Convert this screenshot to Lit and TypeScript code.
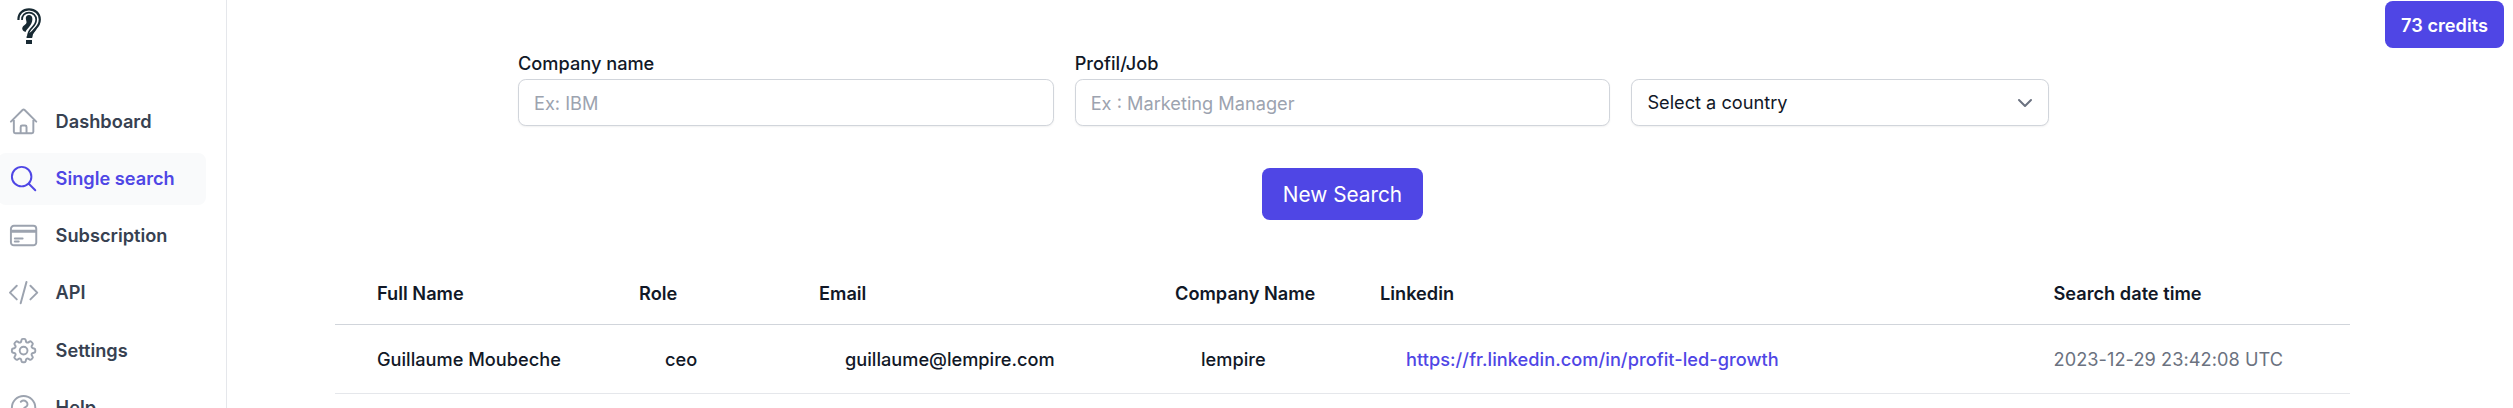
import { LitElement, html, css, svg } from "lit";
import { customElement } from "lit/decorators.js";

const ICONS: Record<string, string> = {
  home: "m2.25 12 8.954-8.955c.44-.439 1.152-.439 1.591 0L21.75 12M4.5 9.75v10.125c0 .621.504 1.125 1.125 1.125H9.75v-4.875c0-.621.504-1.125 1.125-1.125h2.25c.621 0 1.125.504 1.125 1.125V21h4.125c.621 0 1.125-.504 1.125-1.125V9.75M8.25 21h8.25",
  search: "m21 21-5.197-5.197m0 0A7.5 7.5 0 1 0 5.196 5.196a7.5 7.5 0 0 0 10.607 10.607Z",
  card: "M2.25 8.25h19.5M2.25 9h19.5m-16.5 5.25h6m-6 2.25h3m-3.75 3h15a2.25 2.25 0 0 0 2.25-2.25V6.75A2.25 2.25 0 0 0 19.5 4.5h-15a2.25 2.25 0 0 0-2.25 2.25v10.5A2.25 2.25 0 0 0 4.5 19.5Z",
  code: "M17.25 6.75 22.5 12l-5.25 5.25m-10.5 0L1.5 12l5.25-5.25m7.5-3-4.5 16.5",
  cog: "M10.343 3.94c.09-.542.56-.94 1.11-.94h1.093c.55 0 1.02.398 1.11.94l.149.894c.07.424.384.764.78.93.398.164.855.142 1.205-.108l.737-.527a1.125 1.125 0 0 1 1.45.12l.773.774c.39.389.44 1.002.12 1.45l-.527.737c-.25.35-.272.806-.107 1.204.165.397.505.71.93.78l.893.15c.543.09.94.559.94 1.109v1.094c0 .55-.397 1.02-.94 1.11l-.894.149c-.424.07-.764.383-.929.78-.165.398-.143.854.107 1.204l.527.738c.32.447.269 1.06-.12 1.45l-.774.773a1.125 1.125 0 0 1-1.449.12l-.738-.527c-.35-.25-.806-.272-1.203-.107-.398.165-.71.505-.781.929l-.149.894c-.09.542-.56.94-1.11.94h-1.094c-.55 0-1.019-.398-1.11-.94l-.148-.894c-.071-.424-.384-.764-.781-.93-.398-.164-.854-.142-1.204.108l-.738.527c-.447.32-1.06.269-1.45-.12l-.773-.774a1.125 1.125 0 0 1-.12-1.45l.527-.737c.25-.35.272-.806.108-1.204-.165-.397-.506-.71-.93-.78l-.894-.15c-.542-.09-.94-.56-.94-1.109v-1.094c0-.55.398-1.02.94-1.11l.894-.149c.424-.07.765-.383.93-.78.165-.398.143-.854-.108-1.204l-.526-.738a1.125 1.125 0 0 1 .12-1.45l.773-.773a1.125 1.125 0 0 1 1.45-.12l.737.527c.35.25.807.272 1.204.107.397-.165.71-.505.78-.929l.15-.894ZM15 12a3 3 0 1 1-6 0 3 3 0 0 1 6 0Z",
  help: "M9.879 7.519c1.171-1.025 3.071-1.025 4.242 0 1.172 1.025 1.172 2.687 0 3.712-.203.179-.43.326-.67.442-.745.361-1.45.999-1.45 1.827v.75M21 12a9 9 0 1 1-18 0 9 9 0 0 1 18 0Zm-9 5.25h.008v.008H12v-.008Z",
};

const NAV = [
  { label: "Dashboard", icon: "home" },
  { label: "Single search", icon: "search", active: true },
  { label: "Subscription", icon: "card" },
  { label: "API", icon: "code" },
  { label: "Settings", icon: "cog" },
  { label: "Help", icon: "help" },
];

@customElement("app-sidebar")
export class AppSidebar extends LitElement {
  static styles = css`
    :host { display: block; box-sizing: border-box; flex: none; width: 227px; height: 408px; overflow: hidden; border-right: 1px solid #e5e7eb; }
    .logo { display: block; width: 24px; height: 37px; margin: 8px 0 0 17px; }
    .nav { display: flex; flex-direction: column; gap: 5.2px; margin: 50.4px 20px 0 -2.4px; }
    .item { display: flex; box-sizing: border-box; align-items: center; gap: 16.2px; height: 52px; padding-left: 10.6px; border-radius: 7.8px; color: #374151; font-size: 18.2px; font-weight: 600; line-height: 31.2px; text-decoration: none; }
    .item svg { width: 31.2px; height: 31.2px; color: #9ca3af; fill: none; stroke: currentColor; stroke-width: 1.5; stroke-linecap: round; stroke-linejoin: round; }
    .active, .active svg { color: #4f46e5; }
    .active { background: #f9fafb; }
  `;
  render() {
    return html`
      <svg class="logo" viewBox="0 0 24 37" fill="none" stroke="#182a33">
        <path d="M1.500 12C1 5.500 6 1.300 12 1.300c6 0 10.800 4.200 10.800 10.200 0 10-9 8.500-8.500 18" stroke-width="2.200" />
        <path d="M5 12C4.600 7.500 8 4.600 12 4.600c4 0 7.200 3 7.200 7 0 8-8 8-8.200 16" stroke-width="1.700" />
        <path d="M12 7c-2 0-3.200 1.400-3.200 3.200 0 1.600.8 2.600.7 4.200-.2 2.200-4 3-4.300 6 .2 2.200 2 3 3.300 3.600 1.500-3.800 6.800-6.500 6.900-13C15.400 8.500 14 7 12 7Z" fill="#182a33" stroke="none" />
        <path d="M9.500 30c-.3-5 8-7 10-12 1.500 5-4.500 6-4.500 12Z" fill="#182a33" stroke="none" />
        <path d="M9 32h6v4H9z" fill="#182a33" stroke="none" />
      </svg>
      <nav class="nav">
        ${NAV.map((n) => html`<a class="item ${n.active ? "active" : ""}">
          <svg viewBox="0 0 24 24">${svg`<path d=${ICONS[n.icon]} />`}</svg>${n.label}</a>`)}
      </nav>`;
  }
}

@customElement("search-form")
export class SearchForm extends LitElement {
  static styles = css`
    :host { display: flex; flex-direction: column; align-items: center; }
    .fields { display: flex; align-self: flex-start; align-items: flex-end; gap: 21.2px; }
    .field { display: flex; flex-direction: column; width: 535.5px; color: #111827; font-size: 18.2px; font-weight: 500; line-height: 31.2px; }
    .country { width: 418px; }
    .box { box-sizing: border-box; width: 100%; height: 47px; padding: 0 15px; border: 1px solid #d1d5db; border-radius: 7.8px; background: #fff; box-shadow: 0 1px 2px rgba(0, 0, 0, .06); font: 400 18.2px/31.2px Inter, sans-serif; color: #111827; outline: none; }
    .box::placeholder { color: #9ca3af; opacity: 1; }
    .select { display: flex; align-items: center; justify-content: space-between; }
    .chevron { width: 16px; height: 10px; fill: none; stroke: #6b7280; stroke-width: 2; stroke-linecap: round; stroke-linejoin: round; }
    .go { width: 161px; height: 52px; margin-top: 42px; padding: 0; border: 0; border-radius: 7.8px; background: #4f46e5; color: #fff; font: 400 20.8px/31.2px Inter, sans-serif; }
  `;
  render() {
    return html`
      <div class="fields">
        <label class="field">Company name<input class="box" placeholder="Ex: IBM" /></label>
        <label class="field">Profil/Job<input class="box" placeholder="Ex : Marketing Manager" /></label>
        <div class="field country"><div class="box select">Select a country
          <svg class="chevron" viewBox="0 0 16 10"><path d="M2 2l6 6 6-6" /></svg></div></div>
      </div>
      <button class="go">New Search</button>`;
  }
}

@customElement("results-table")
export class ResultsTable extends LitElement {
  static styles = css`
    :host { display: block; }
    .row { display: grid; box-sizing: border-box; grid-template-columns: 262px 180px 356px 205px 673.5px 1fr; align-items: center; padding-left: 42px; font-size: 18.2px; line-height: 26px; font-weight: 500; color: #111827; white-space: nowrap; }
    .head { height: 63px; font-weight: 600; border-bottom: 1px solid #d1d5db; }
    .body { height: 69px; border-bottom: 1px solid #e5e7eb; }
    .in { padding-left: 26px; }
    .link { color: #4f46e5; text-decoration: none; letter-spacing: .04px; }
    .date { color: #6b7280; font-weight: 400; letter-spacing: .05px; }
  `;
  render() {
    return html`
      <div class="row head"><span>Full Name</span><span>Role</span><span>Email</span><span>Company Name</span><span>Linkedin</span><span>Search date time</span></div>
      <div class="row body">
        <span>Guillaume Moubeche</span><span class="in">ceo</span><span class="in">guillaume@lempire.com</span>
        <span class="in">lempire</span><a class="in link">https://fr.linkedin.com/in/profit-led-growth</a>
        <span class="date">2023-12-29 23:42:08 UTC</span>
      </div>`;
  }
}

@customElement("app-root")
export class AppRoot extends LitElement {
  static styles = css`
    :host { display: flex; height: 408px; overflow: hidden; background: #fff; font-family: Inter, sans-serif; }
    .main { display: flex; flex: 1; flex-direction: column; min-width: 0; }
    .top { display: flex; justify-content: flex-end; height: 48px; padding: 1px 9px 0 0; box-sizing: border-box; }
    .credits { display: flex; box-sizing: border-box; align-items: center; justify-content: center; width: 119px; height: 47px; border-radius: 7.8px; background: #4f46e5; color: #fff; font-size: 18.2px; font-weight: 600; }
    .form { width: 1649px; margin: 0 0 0 291px; }
    .table { width: 2015px; margin: 42px 0 0 108px; }
  `;
  render() {
    return html`
      <app-sidebar></app-sidebar>
      <main class="main">
        <div class="top"><span class="credits">73 credits</span></div>
        <search-form class="form"></search-form>
        <results-table class="table"></results-table>
      </main>`;
  }
}
